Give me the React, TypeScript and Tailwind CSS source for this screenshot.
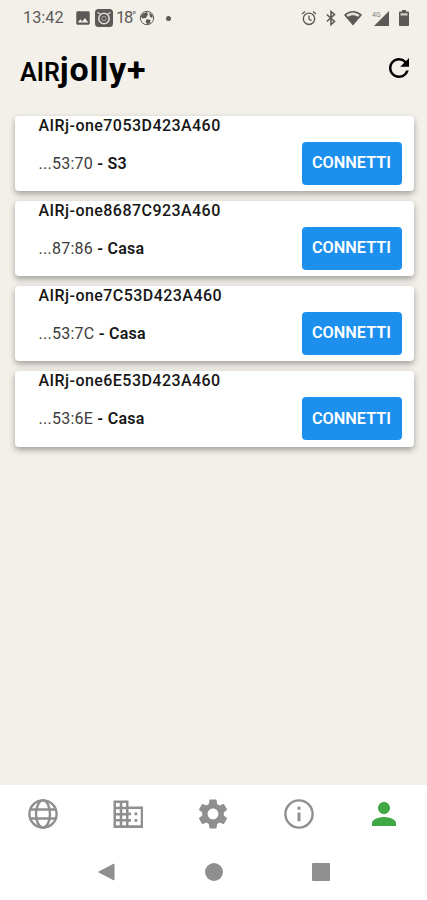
import React from 'react';
import {
  MdImage,
  MdPerson,
  MdRefresh,
  MdSettings,
} from 'react-icons/md';

interface Device {
  name: string;
  shortId: string;
  room: string;
}

interface IconProps {
  className?: string;
}

const devices: Device[] = [
  { name: 'AIRj-one7053D423A460', shortId: '...53:70', room: 'S3' },
  { name: 'AIRj-one8687C923A460', shortId: '...87:86', room: 'Casa' },
  { name: 'AIRj-one7C53D423A460', shortId: '...53:7C', room: 'Casa' },
  { name: 'AIRj-one6E53D423A460', shortId: '...53:6E', room: 'Casa' },
];

const GlobeIcon: React.FC<IconProps> = ({ className }) => (
  <svg className={className} viewBox="0 0 36 36" fill="none" stroke="currentColor" strokeWidth="2.4">
    <circle cx="18" cy="18" r="13.6" />
    <ellipse cx="18" cy="18" rx="7" ry="13.6" />
    <path d="M5.2 13.5h25.6M5.2 22.5h25.6" />
  </svg>
);

const BuildingIcon: React.FC<IconProps> = ({ className }) => (
  <svg className={className} viewBox="0 0 36 36">
    <path
      fill="currentColor"
      fillRule="evenodd"
      d="M3.5 4.5h15v6h14.5v21.5h-29.5zM6 7v3.7h3.7V7zM12.3 7v3.7H16V7zM6 13.2v3.7h3.7v-3.7zM12.3 13.2v3.7H16v-3.7zM6 19.4v3.7h3.7v-3.7zM12.3 19.4v3.7H16v-3.7zM6 25.6v3.7h3.7v-3.7zM12.3 25.6v3.7H16v-3.7zM18.5 12.9v3.6h2.5v2.8h-2.5v3.6h2.5v2.8h-2.5v3.6h12.2V12.9z"
    />
    <path fill="currentColor" d="M24.5 16.5h2.8v2.8h-2.8zM24.5 22.9h2.8v2.8h-2.8z" />
  </svg>
);

const InfoIcon: React.FC<IconProps> = ({ className }) => (
  <svg className={className} viewBox="0 0 36 36" fill="none" stroke="currentColor">
    <circle cx="18" cy="18" r="13.6" strokeWidth="2.4" />
    <path d="M18 16.5v8.8M18 10.8v3" strokeWidth="3" />
  </svg>
);

const tabs = [
  { id: 'web', icon: GlobeIcon },
  { id: 'building', icon: BuildingIcon },
  { id: 'settings', icon: MdSettings },
  { id: 'info', icon: InfoIcon },
  { id: 'profile', icon: MdPerson },
];

const StatusBar: React.FC = () => (
  <div className="flex h-9 shrink-0 items-center justify-between pl-[23px] pr-[14px] text-[#5c5a57]">
    <div className="flex items-center">
      <span className="w-[51px] text-[16.3px] leading-none">13:42</span>
      <MdImage className="size-[18px]" />
      {/* camera app */}
      <svg className="ml-[3px] size-[18px]" viewBox="0 0 18 18" fill="none">
        <rect width="18" height="18" rx="3.5" fill="currentColor" />
        <circle cx="9" cy="9.5" r="5.2" stroke="#e0ddd7" strokeWidth="1.5" />
        <circle cx="9" cy="9.5" r="2.2" stroke="#aaa7a1" strokeWidth="1" />
        <path d="M2.5 3.5 5.5 5M15.5 3.5 12.5 5" stroke="#e0ddd7" strokeWidth="1.3" />
      </svg>
      <span className="ml-[3px] w-[23px] whitespace-nowrap text-[16.5px] leading-none tracking-[-1.2px]">
        18<span className="inline-block origin-top-left scale-70">°</span>
      </span>
      {/* ball */}
      <svg className="size-4" viewBox="0 0 16 16" fill="none">
        <circle cx="8" cy="8" r="6.7" stroke="currentColor" strokeWidth="1" />
        <path d="M4 3.5 8 2l1 2.5-2 3.5-4 .5L2 6zM10 2.5l3.5 2.5v3L11 7zM8 9l3.5 1-.5 3.500-3 .5-1.500-2.500z" fill="currentColor" />
      </svg>
      <span className="ml-[11px] size-[5px] rounded-full bg-[#5c5a57]" />
    </div>
    <div className="flex items-center">
      {/* alarm */}
      <svg className="size-4" viewBox="0 0 16 16" fill="none" stroke="currentColor">
        <circle cx="8" cy="8.8" r="5.7" strokeWidth="1.4" />
        <path d="M1 4 4 1.5M15 4l-3-2.5M8 5.5v3.6l2.5 1.5" strokeWidth="1.3" />
      </svg>
      {/* bluetooth */}
      <svg className="ml-[6px] size-4" viewBox="0 0 16 16" fill="none" stroke="currentColor">
        <path d="m3.800 4.500 7.700 7L8 14.500v-13l3.500 3-7.700 7" strokeWidth="1.6" />
      </svg>
      <svg className="ml-[5px] h-4 w-[18px]" viewBox="0 0 18 16">
        <path d="M0 5C5-.2 13-.2 18 5L9 15.5z" fill="currentColor" />
        <path d="M2.3 5.1C6.3 1.7 11.7 1.7 15.7 5.1l-1.6 1.6c-3.2-2.1-7-2.1-10.2 0z" fill="#e5e2dc" />
      </svg>
      <svg className="ml-[10px] h-4 w-[17px]" viewBox="0 0 17 16">
        <path d="M17 1v15H2z" fill="currentColor" />
        <text x="0" y="6.5" fontSize="7" fill="#85827d" fontFamily="Roboto">4G</text>
      </svg>
      {/* battery, with the empty part at the top */}
      <svg className="ml-[10px] mr-[4px] h-4 w-[10px]" viewBox="0 0 10 16">
        <path d="M3 0h4v1.5h2a1 1 0 0 1 1 1V15a1 1 0 0 1-1 1H1a1 1 0 0 1-1-1V2.5a1 1 0 0 1 1-1h2z" fill="currentColor" />
        <path d="M1.5 3.3h7v2.2h-7z" fill="#d5d2cc" />
      </svg>
    </div>
  </div>
);

const DeviceCard: React.FC<{ device: Device }> = ({ device }) => (
  <article className="h-[75.3px] rounded-[4px] bg-white pl-6 pr-3 shadow-[0_3px_6px_rgba(0,0,0,0.34)]">
    <h2 className="h-[26px] text-[16px] font-medium leading-5 tracking-[0.45px]">{device.name}</h2>
    <div className="flex items-center justify-between">
      <p className="pt-px text-[16px] leading-5 tracking-[0.25px] text-[#3c3c3c]">
        {device.shortId} <strong className="font-semibold text-[#161616]">- {device.room}</strong>
      </p>
      <button className="h-[43px] w-[100px] rounded-[4px] bg-[#1d90ee] text-[16.3px] font-semibold text-white">
        CONNETTI
      </button>
    </div>
  </article>
);

const App: React.FC = () => {
  return (
    <div className="flex h-[900px] w-[427px] flex-col overflow-hidden bg-[#f3f0ea] font-['Roboto',sans-serif] text-[#161616]">
      <StatusBar />
      <header className="flex h-[79.5px] shrink-0 items-start justify-between pl-5 pr-[13px]">
        <h1 className="mt-[13px] text-[34px] font-bold leading-[40px] tracking-[0.8px] text-black">
          <span className="text-[25px] font-semibold tracking-normal">AIR</span>jolly+
        </h1>
        <MdRefresh className="mt-[17px] size-[30px] text-black" />
      </header>
      <main className="flex flex-1 flex-col gap-[10px] pl-[14.5px] pr-[13.5px]">
        {devices.map((device) => (
          <DeviceCard key={device.name} device={device} />
        ))}
      </main>
      <nav className="grid h-[59px] shrink-0 grid-cols-5 place-items-center bg-white pb-px">
        {tabs.map(({ id, icon: Icon }) => (
          <Icon key={id} className={id === 'profile' ? 'size-9 text-[#40a845]' : 'size-9 text-[#8f8f8f]'} />
        ))}
      </nav>
      {/* system buttons */}
      <div className="flex h-14 shrink-0 items-start justify-center gap-[89px] bg-white pt-[19px] text-[#8f8f8f]">
        <svg className="size-[18px]" viewBox="0 0 18 18" fill="currentColor">
          <path d="M16 1v16L.7 9z" stroke="currentColor" strokeLinejoin="round" />
        </svg>
        <span className="size-[18px] rounded-full bg-[#8f8f8f]" />
        <span className="size-[18px] rounded-[1px] bg-[#8f8f8f]" />
      </div>
    </div>
  );
};

export default App;
